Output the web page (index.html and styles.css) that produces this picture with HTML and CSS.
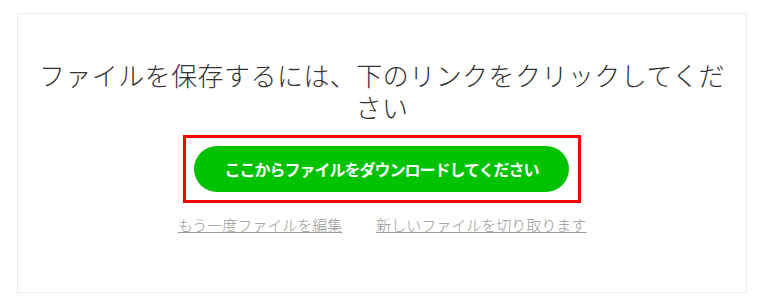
FILE: index.html
```html
<!DOCTYPE html>
<html lang="ja">
<head>
<meta charset="utf-8">
<link rel="stylesheet" href="styles.css">
</head>
<body>
<div class="card">
  <h1 class="title">ファイルを保存するには、下のリンクをクリックしてください</h1>
  <div class="highlight">
    <a class="btn" href="#">ここからファイルをダウンロードしてください</a>
  </div>
  <div class="links">
    <a href="#">もう一度ファイルを編集</a>
    <a href="#">新しいファイルを切り取ります</a>
  </div>
</div>
</body>
</html>
```

FILE: styles.css
```css
html, body {
  margin: 0;
  background: #fff;
}
body {
  padding: 13px 0 0 17px;
  font-family: "Noto Sans CJK JP", "Noto Sans", sans-serif;
}
.card {
  box-sizing: border-box;
  width: 730px;
  height: 280px;
  border: 1px solid #ebebeb;
  padding: 45px 19px 0;
  display: flex;
  flex-direction: column;
  align-items: center;
}
.title {
  margin: 0;
  font-size: 26px;
  line-height: 32px;
  font-weight: 300;
  letter-spacing: 0.45px;
  color: #333;
  text-align: center;
}
.highlight {
  margin-top: 12px;
  width: 398px;
  height: 68px;
  box-sizing: border-box;
  border: 3px solid #ff0000;
  padding: 8px 9px 8px 8px;
}
.btn {
  display: flex;
  align-items: center;
  justify-content: center;
  height: 46px;
  border-radius: 23px;
  background: #00c300;
  color: #fff;
  font-size: 16px;
  font-weight: 700;
  letter-spacing: -1px;
  text-decoration: none;
}
.links {
  margin-top: 12px;
  display: flex;
  gap: 34px;
  font-size: 15px;
  line-height: 20px;
}
.links a {
  color: #999;
  text-decoration: underline;
  font-weight: 300;
}
```
